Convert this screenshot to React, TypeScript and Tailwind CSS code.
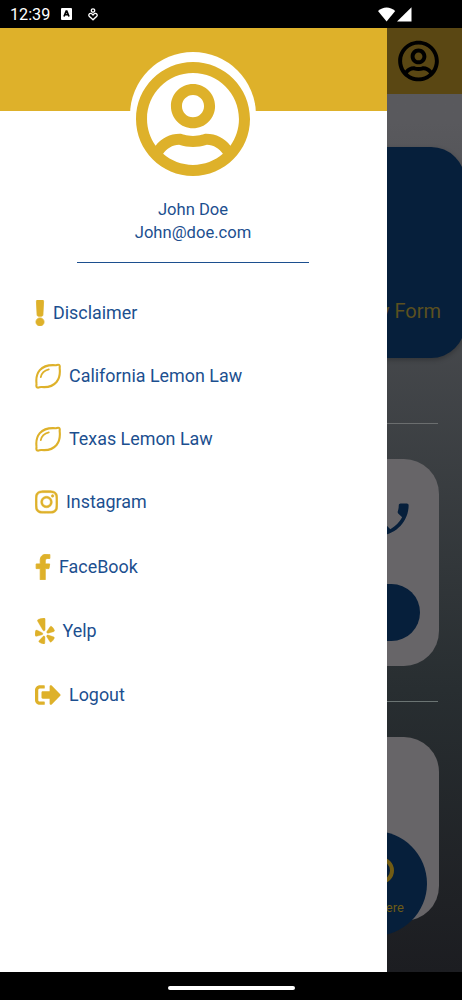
import type { ReactNode } from "react";
import {
  FaExclamation,
  FaFacebookF,
  FaInstagram,
  FaRegUserCircle,
  FaSignOutAlt,
  FaYelp,
} from "react-icons/fa";
import { MdPhone } from "react-icons/md";

function StatusBar() {
  return (
    <div className="flex h-7 shrink-0 items-center bg-black pl-[10px] pr-[50px] text-white">
      <span className="w-[51px] pt-[2px] text-[16.2px] leading-5 whitespace-nowrap">12:39</span>
      <svg className="h-3 w-[11px]" viewBox="0 0 11 12">
        <rect width="11" height="12" rx="1" fill="#fff" />
        <path d="M3 8.5 5.2 3h.6L8 8.5M3.900 6.700h3.200" stroke="#000" strokeWidth="1.7" fill="none" />
      </svg>
      <svg className="ml-4 h-[13px] w-[10px]" viewBox="0 0 10 13" fill="none" stroke="#fff" strokeWidth="1.3">
        <circle cx="5" cy="2.5" r="1.7" />
        <path d="M5 11.8 1.200 8.200C.2 6.800 1.500 5 3 5.400 4 5.600 4.600 6.300 5 7c.4-.7 1-1.400 2-1.600 1.500-.4 2.800 1.400 1.800 2.800Z" />
      </svg>
      <svg className="ml-auto h-[15px] w-[34px]" viewBox="0 0 34 15" fill="#fff">
        <path d="M0 4C5-.8 12.200-.8 17.200 4L8.600 14.500Z" />
        <path d="M33.500.3v14.200H19Z" />
      </svg>
    </div>
  );
}

function LemonIcon() {
  return (
    <svg
      className="size-[26px]"
      viewBox="0 0 26 26"
      fill="none"
      stroke="currentColor"
      strokeWidth="2.1"
      strokeLinecap="round"
      strokeLinejoin="round"
    >
      <path d="M20.500 2.200C21.800 2.200 22.700 1.200 24 1.900C25.400 2.700 24.500 4.200 24.700 5.500C25.200 10 25 14.500 21.500 19C17.500 23.800 12.500 24.600 6.500 24C4.700 23.800 3.500 25.300 2 24.300C.7 23.400 1.700 21.800 1.500 20.500C.9 15.500 1.200 11.500 4.800 7.200C8.800 2.600 14 1.700 20.500 2.200Z" />
      <path d="M5.800 14.200C6.500 10.200 9.500 7.200 13.800 6.300" strokeWidth="1.800" />
    </svg>
  );
}

function HomeScreen() {
  return (
    <div className="flex h-full flex-col bg-linear-to-b from-[#59595d] from-10% via-[#282e31] via-70% to-[#1c1d21]">
      <div className="flex h-[66px] shrink-0 items-center justify-end bg-[#5a4713] pr-[23px]">
        <FaRegUserCircle className="h-[42px] w-[41px] text-black" />
      </div>
      <div className="-mr-[3px] mt-[53px] flex h-[211px] shrink-0 items-end justify-end rounded-[34px] bg-[#061f3b] pr-6 pb-[34px] shadow-[0_2px_5px_rgba(0,0,0,0.25)]">
        <span className="text-[20px] leading-[26px] text-[#5b5020]">Inquiry Form</span>
      </div>
      <div className="mt-[65px] mr-6 h-px shrink-0 bg-[#6b6e6f]" />
      <div className="mt-[35px] mr-[23px] flex h-[207px] shrink-0 flex-col items-end rounded-[35px] bg-[#676568] pt-[39px] pr-[19px]">
        <MdPhone className="mr-[6px] size-[43px] -scale-x-100 text-[#061f3b]" />
        <div className="mt-[43px] h-[57px] w-[180px] rounded-full bg-[#061f3b]" />
      </div>
      <div className="mt-[35px] mr-6 h-px shrink-0 bg-[#6b7473]" />
      <div className="mt-[35px] mr-[23px] flex h-[184px] shrink-0 justify-end rounded-[35px] bg-[#676568] pt-[94px] pr-3">
        <div className="flex size-[105px] shrink-0 flex-col items-center rounded-full bg-[#061f3b] pt-[26px] text-[#6c5b16]">
          <div className="ml-3 size-[27px] shrink-0 rounded-full border-4 border-[#725c14]" />
          <span className="mt-[15px] text-[13px] leading-[18px] whitespace-nowrap">Click Here</span>
        </div>
      </div>
    </div>
  );
}

function MenuItem({ icon, label }: { icon: ReactNode; label: string }) {
  return (
    <li className="flex h-[26px] items-center gap-2">
      <span className="text-[#deb12a]">{icon}</span>
      <span className="text-[17.9px] leading-6 text-[#1c4f8f]">{label}</span>
    </li>
  );
}

function Drawer() {
  return (
    <aside className="absolute inset-y-0 left-0 flex w-[387px] flex-col bg-white">
      <div className="flex h-[83px] shrink-0 justify-center bg-[#deb12a] pt-6 pr-px">
        <div className="flex size-[126px] shrink-0 items-center justify-center rounded-full bg-white pt-2">
          <FaRegUserCircle className="h-[118px] w-[114px] text-[#deb12a]" />
        </div>
      </div>
      <div className="mt-[87px] ml-[77px] flex h-[65px] w-[232px] flex-col items-center border-b border-[#1c4f8f] text-[16.600px] leading-[23px] text-[#1c4f8f]">
        <span>John Doe</span>
        <span>John@doe.com</span>
      </div>
      <ul className="mt-[37px] flex flex-col gap-[37px] pl-[35px]">
        <MenuItem icon={<FaExclamation className="h-[26px] w-[10px] stroke-[#deb12a] stroke-[16]" />} label="Disclaimer" />
        <MenuItem icon={<LemonIcon />} label="California Lemon Law" />
        <MenuItem icon={<LemonIcon />} label="Texas Lemon Law" />
        <MenuItem icon={<FaInstagram className="h-[26px] w-[23px] stroke-[#deb12a] stroke-[8]" />} label="Instagram" />
      </ul>
      <ul className="mt-[39px] flex flex-col gap-[38px] pl-[35px]">
        <MenuItem icon={<FaFacebookF className="h-[26px] w-4 stroke-[#deb12a] stroke-[18]" />} label="FaceBook" />
        <MenuItem icon={<FaYelp className="h-[26px] w-[19.5px] stroke-[#deb12a] stroke-[8]" />} label="Yelp" />
        <MenuItem icon={<FaSignOutAlt className="size-[26px]" />} label="Logout" />
      </ul>
    </aside>
  );
}

export default function App() {
  return (
    <div className="flex h-[1000px] w-[462px] flex-col overflow-hidden bg-black font-['Roboto',sans-serif]">
      <StatusBar />
      <main className="relative h-[944px] shrink-0 overflow-hidden">
        <HomeScreen />
        <Drawer />
      </main>
      <div className="flex h-7 shrink-0 items-center justify-center pt-1">
        <div className="h-1 w-[127px] rounded-full bg-white" />
      </div>
    </div>
  );
}
